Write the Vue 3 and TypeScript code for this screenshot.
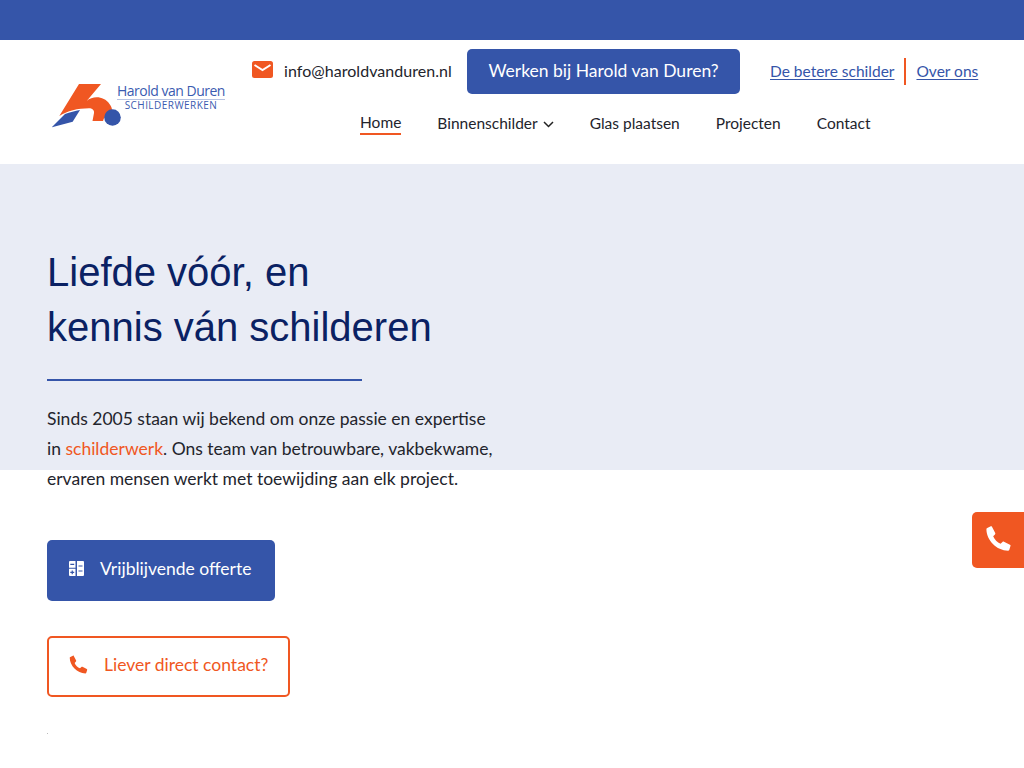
<script setup lang="ts">
const navItems: { label: string; active?: boolean; caret?: boolean }[] = [
  { label: 'Home', active: true },
  { label: 'Binnenschilder', caret: true },
  { label: 'Glas plaatsen' },
  { label: 'Projecten' },
  { label: 'Contact' },
]
const phonePath =
  'M6.6 2.200 9.300 7.400c.2.4.1.9-.2 1.200L7.600 10.200c1 2.600 3.400 5 6.100 6.200l1.600-1.600c.3-.3.8-.4 1.200-.2l5 2.600c.4.2.6.7.4 1.100l-1 3.200c-.2.4-.6.7-1 .7C10.500 22 2 13.500 2 4.400c0-.4.3-.9.7-1l2.900-1.500c.4-.2.8-.1 1 .3z'
</script>

<template>
  <div class="page">
    <div class="topbar"></div>
    <header class="header">
      <a class="logo" href="#">
        <svg class="logo-mark" width="72" height="46" viewBox="0 0 72 46">
          <path fill="#f05722" d="M27 0H49L34.700 17C41 11.500 52 12 57.500 20 59 22 60 24 60 26 56 27 53 31 51 37H40.500L42 29C42.500 26 40 24.300 37 24.300 26 24.300 15 27 7.300 32Z" />
          <path fill="#3555a9" d="M-.3 43.300 13 30C18 28 23 27 28 26L20.700 37.700Z" />
          <circle fill="#3555a9" cx="60.500" cy="33.500" r="8.300" />
        </svg>
        <span class="logo-text">
          <span class="logo-name">Harold van Duren</span>
          <span class="logo-sub">SCHILDERWERKEN</span>
        </span>
      </a>
      <div class="header-right">
        <div class="utility">
          <a class="mail" href="#">
            <svg width="21" height="17" viewBox="0 0 21 17">
              <rect width="21" height="17" rx="2.500" fill="#f05722" />
              <path d="M2.500 4 10.500 9 18.500 4" fill="none" stroke="#fff" stroke-width="2" />
            </svg>
            <span>info@haroldvanduren.nl</span>
          </a>
          <a class="jobs" href="#">Werken bij Harold van Duren?</a>
          <div class="links">
            <a href="#">De betere schilder</a>
            <span class="divider"></span>
            <a href="#">Over ons</a>
          </div>
        </div>
        <nav class="nav">
          <a v-for="item in navItems" :key="item.label" href="#" :class="{ active: item.active }">
            {{ item.label }}
            <svg v-if="item.caret" class="caret" width="11" height="7" viewBox="0 0 11 7">
              <path d="M1 1 5.500 5.500 10 1" fill="none" stroke="#222" stroke-width="1.500" />
            </svg>
          </a>
        </nav>
      </div>
    </header>

    <section class="hero">
      <h1>Liefde vóór, en<br />kennis ván schilderen</h1>
      <div class="rule"></div>
      <p>
        Sinds 2005 staan wij bekend om onze passie en expertise<br />
        in <a href="#">schilderwerk</a>. Ons team van betrouwbare, vakbekwame,<br />
        ervaren mensen werkt met toewijding aan elk project.
      </p>
    </section>

    <div class="actions">
      <a class="btn primary" href="#">
        <svg width="15" height="15" viewBox="0 0 15 15">
          <path fill="#fff" d="M1 0H6.500V6.800H0V1A1 1 0 0 1 1 0ZM0 7.800H6.500V15H1A1 1 0 0 1 0 14ZM8 0H14A1 1 0 0 1 15 1V14A1 1 0 0 1 14 15H8Z" />
          <path fill="none" stroke="#3555a9" stroke-width="1.200" d="M1.300 3.400H5.200M1.300 11.400H5.200M3.250 9.500V13.300M9.500 5H13.500M9.500 10H13.500" />
        </svg>
        Vrijblijvende offerte
      </a>
      <a class="btn outline" href="#">
        <svg width="21" height="21" viewBox="0 0 24 24"><path fill="#f05722" :d="phonePath" /></svg>
        Liever direct contact?
      </a>
      <span class="dot"></span>
    </div>

    <a class="float-call" href="#" aria-label="Bellen">
      <svg width="29" height="29" viewBox="0 0 24 24"><path fill="#fff" :d="phonePath" /></svg>
    </a>
  </div>
</template>

<style>
html,
body {
  margin: 0;
  background: #fff;
}
</style>

<style scoped>
.page {
  position: relative;
  width: 1024px;
  height: 768px;
  overflow: hidden;
  font-family: Lato, "Noto Sans", sans-serif;
  color: #23242c;
}
a {
  text-decoration: none;
  color: inherit;
}
.topbar {
  height: 40px;
  background: #3555a9;
}
.header {
  height: 124px;
  display: flex;
  background: #fff;
}
.logo {
  width: 252px;
  padding: 44px 0 0 52px;
  box-sizing: border-box;
  display: flex;
  align-items: flex-start;
}
.logo-mark {
  flex: none;
}
.logo-text {
  display: flex;
  flex-direction: column;
  align-items: center;
  margin: -2px 0 0 -7px;
  color: #3b5bb0;
  font-family: "Open Sans", sans-serif;
  white-space: nowrap;
}
.logo-name {
  font-size: 14px;
  line-height: 17px;
  letter-spacing: -0.5px;
  border-bottom: 1px solid #b7c3e2;
}
.logo-sub {
  font-size: 10px;
  line-height: 11px;
  letter-spacing: 0.45px;
}
.header-right {
  flex: 1;
  display: flex;
  flex-direction: column;
}
.utility {
  display: flex;
  align-items: center;
  margin-top: 9px;
  height: 45px;
}
.mail {
  display: flex;
  align-items: center;
  gap: 11px;
  font-size: 16px;
  line-height: 20px;
  width: 215px;
  padding-bottom: 2px;
  box-sizing: border-box;
  letter-spacing: 0.05px;
}
.mail svg {
  margin-top: -3px;
}
.jobs {
  width: 273px;
  height: 45px;
  background: #3555a9;
  color: #fff;
  border-radius: 5px;
  font-size: 17.500px;
  display: flex;
  align-items: center;
  justify-content: center;
  padding-bottom: 3px;
  box-sizing: border-box;
}
.links {
  display: flex;
  align-items: center;
  margin-left: 30px;
  font-size: 15.500px;
  color: #3555a9;
}
.links a {
  text-decoration: underline;
  text-underline-offset: 2px;
  margin-top: -2px;
}
.divider {
  width: 2px;
  height: 27px;
  background: #f05722;
  margin: 0 10px;
}
.nav {
  display: flex;
  gap: 36px;
  margin: 17px 0 0 108px;
  font-size: 15.500px;
  line-height: 22px;
}
.nav a {
  display: flex;
  align-items: center;
  gap: 5px;
  height: 24px;
  box-sizing: border-box;
}
.nav a.active {
  border-bottom: 2px solid #f05722;
}
.caret {
  margin-top: 3px;
}
.hero {
  height: 306px;
  background: #e9ecf5;
  padding: 81px 0 0 47px;
  box-sizing: border-box;
}
h1 {
  margin: 0;
  font-family: "Liberation Sans", Arial, sans-serif;
  font-weight: 400;
  font-size: 40px;
  line-height: 55px;
  color: #0a2163;
}
.rule {
  width: 315px;
  height: 2px;
  background: #3555a9;
  margin-top: 24px;
}
.hero p {
  margin: 23px 0 0;
  font-size: 17.500px;
  line-height: 30px;
  white-space: nowrap;
}
.hero p a {
  color: #f05722;
}
.actions {
  display: flex;
  flex-direction: column;
  align-items: flex-start;
  padding: 70px 0 0 47px;
}
.btn {
  display: flex;
  align-items: center;
  border-radius: 5px;
  font-size: 17.500px;
  padding-bottom: 5px;
  box-sizing: border-box;
}
.primary {
  width: 228px;
  height: 61px;
  padding-left: 22px;
  gap: 16px;
  background: #3555a9;
  color: #fff;
}
.outline {
  width: 243px;
  height: 61px;
  margin-top: 35px;
  padding-left: 19px;
  gap: 15px;
  border: 2px solid #f05722;
  color: #f05722;
}
.dot {
  width: 1px;
  height: 1px;
  margin-top: 36px;
  background: #bbb;
}
.float-call {
  position: absolute;
  top: 512px;
  right: 0;
  width: 52px;
  height: 56px;
  background: #f05722;
  border-radius: 5px 0 0 5px;
  display: flex;
  align-items: center;
  justify-content: center;
  padding-bottom: 4px;
  box-sizing: border-box;
}
</style>
